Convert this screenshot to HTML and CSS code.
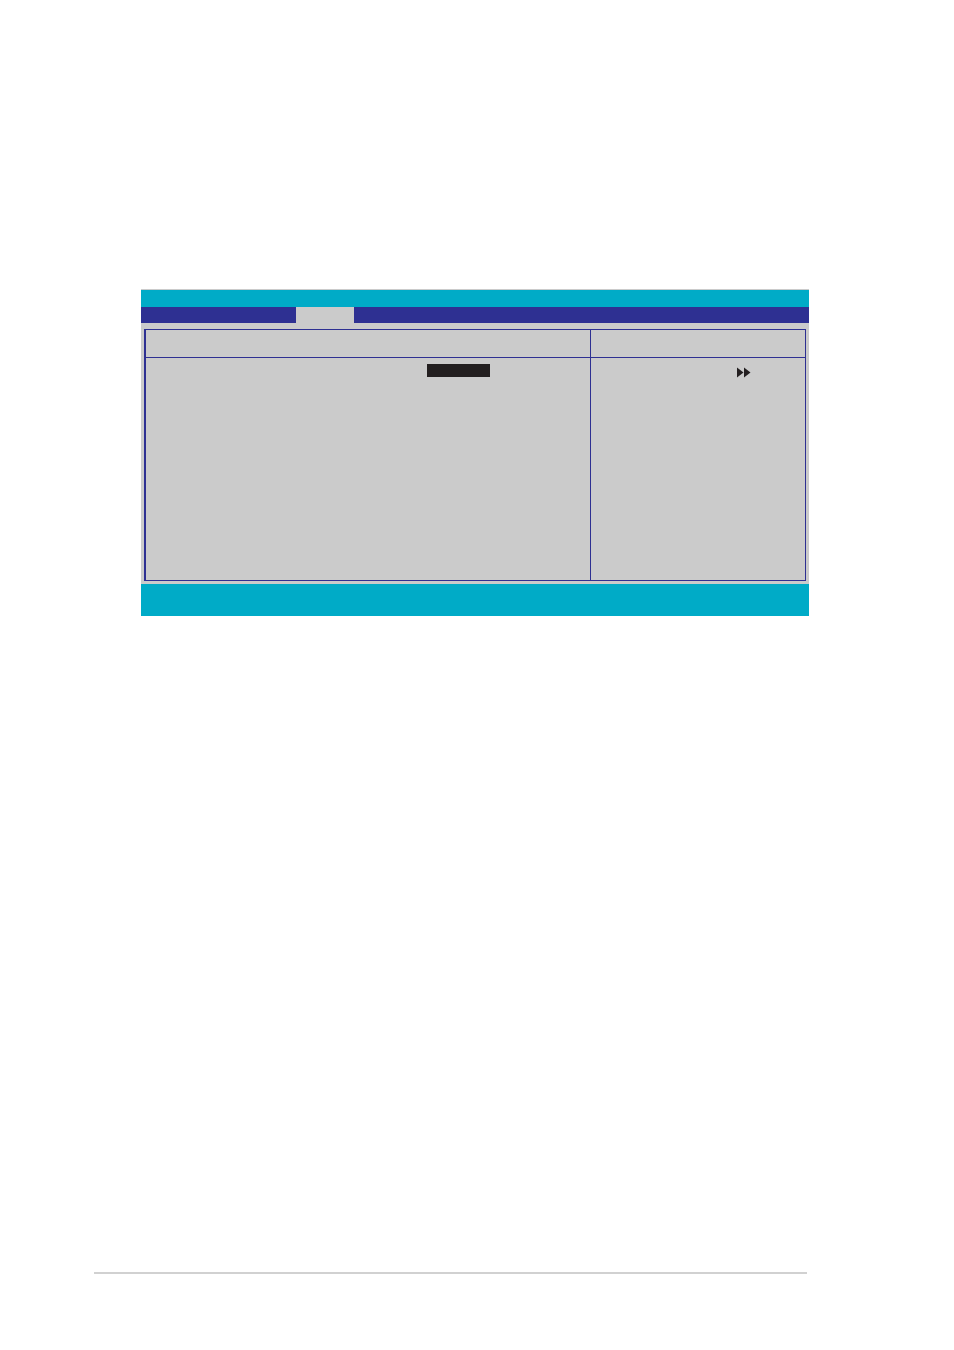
FILE: index.html
```html
<!DOCTYPE html>
<html lang="en">
<head>
    <meta charset="UTF-8" />
    <meta name="viewport" content="width=device-width, initial-scale=1.0" />
    <link rel="stylesheet" href="styles.css">
</head>

<body>
    <main class="screen">
        <div class="title-bar"></div>
        <nav class="menu-bar">
            <button class="tab" aria-label="Current menu"></button>
        </nav>
        <div class="workspace">
            <div class="panel">
                <div class="head"></div>
                <div class="head side"></div>
                <section class="options">
                    <button class="field" aria-label="Selected option"></button>
                </section>
                <aside class="help side">
                    <svg class="arrows" viewBox="0 0 14 11" width="14" height="11" aria-hidden="true">
                        <path d="M0 0.5 6.5 5.5 0 10.5ZM7 0.5 13.5 5.5 7 10.5Z" />
                    </svg>
                </aside>
            </div>
        </div>
        <div class="key-bar"></div>
    </main>
    <footer class="page-foot">
        <hr class="rule">
    </footer>
</body>

</html>
```

FILE: styles.css
```css
* {
    box-sizing: border-box;
}
body {
    display: flex;
    flex-direction: column;
    justify-content: space-between;
    min-height: 100vh;
    margin: 0;
    padding-top: 289px;
    background-color: #ffffff;
    font-family: "Liberation Sans", Arial, sans-serif;
}
button {
    display: block;
    border: 0;
    padding: 0;
    cursor: pointer;
}

.screen {
    margin: 0 145px 0 141px;
    border-top: 1px solid #cbcbcb;
    background-color: #cbcbcb;
}
.title-bar {
    height: 17px;
    background-color: #00abc7;
}
.menu-bar {
    height: 16px;
    padding-left: 155px;
    background-color: #2e3092;
}
.tab {
    width: 58px;
    height: 16px;
    background-color: #cbcbcb;
}

.workspace {
    padding: 6px 3px 3px;
}
.panel {
    display: grid;
    grid-template-columns: 444fr 215fr;
    border: 1px solid #2e3092;
    border-left-width: 2px;
}
.head {
    min-height: 28px;
    border-bottom: 1px solid #2e3092;
}
.side {
    border-left: 1px solid #2e3092;
}
.options {
    min-height: 222px;
    padding: 6px 0 0 281px;
}
.field {
    width: 63px;
    height: 13px;
    background-color: #231f20;
}
.help {
    padding: 9px 0 0 146px;
}
.arrows {
    display: block;
    fill: #231f20;
}
.key-bar {
    height: 32px;
    background-color: #00abc7;
}

.page-foot {
    padding: 0 147px 76px 94px;
}
.rule {
    height: 2px;
    margin: 0;
    border: 0;
    background-color: #d1d1d1;
}
```
